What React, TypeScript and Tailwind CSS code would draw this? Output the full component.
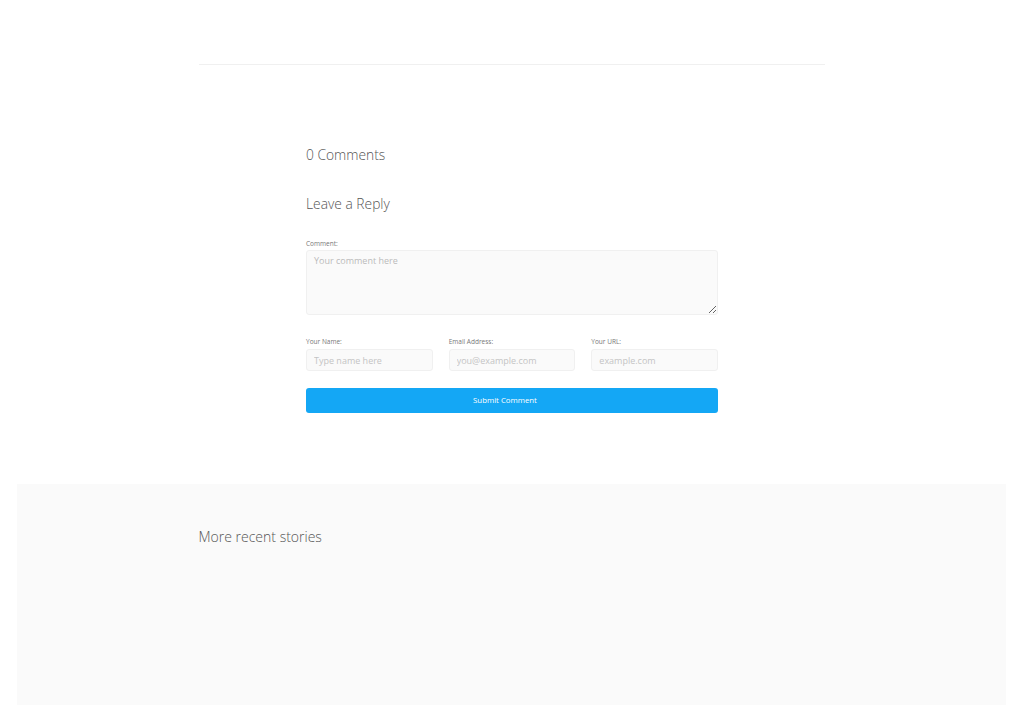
export default function App() {
  const font = { fontFamily: '"Open Sans", sans-serif' };
  return (
    <div className="min-h-[723px] bg-white text-[#444]" style={font}>
      <div className="pt-[64px]">
        <div className="mx-auto h-px w-[626px] bg-[#f0f0f0]" />
      </div>

      {/* Comments */}
      <section className="mx-auto w-[412px] pt-[80px]">
        <h3 className="text-[13.8px] font-light leading-[20px] text-[#555]">0 Comments</h3>
        <h3 className="mt-[29px] text-[13.8px] font-light leading-[20px] text-[#555]">Leave a Reply</h3>

        <form className="mt-[25px]" onSubmit={(e) => e.preventDefault()}>
          <label className="block text-[6.5px] leading-[10px] text-[#777]">Comment:</label>
          <textarea
            placeholder="Your comment here"
            className="mt-[1px] block h-[65px] w-full rounded-[3px] border border-[#f0f0f0] bg-[#fafafa] px-[7px] py-[3px] text-[9px] text-[#555] placeholder:text-[#bbb] outline-none"
          />

          <div className="mt-[22px] grid grid-cols-3 gap-[16px]">
            {[
              ['Your Name:', 'Type name here'],
              ['Email Address:', 'you@example.com'],
              ['Your URL:', 'example.com'],
            ].map(([label, ph]) => (
              <div key={label}>
                <label className="block text-[6.5px] leading-[10px] text-[#777]">{label}</label>
                <input
                  placeholder={ph}
                  className="mt-[2px] block h-[22px] w-full rounded-[3px] border border-[#f0f0f0] bg-[#fafafa] px-[7px] text-[9px] text-[#555] placeholder:text-[#c4c4c4] outline-none"
                />
              </div>
            ))}
          </div>

          <button
            type="submit"
            className="mt-[17px] block h-[25px] w-full rounded-[3px] bg-[#14a7f5] pr-[14px] text-[7.8px] text-white"
          >
            Submit Comment
          </button>
        </form>
      </section>

      {/* More recent stories */}
      <section className="ml-[17px] mt-[71px] h-[221px] w-[989px] bg-[#fafafa]">
        <div className="mx-auto w-[626px] pt-[43px]">
          <h3 className="text-[14px] font-light leading-[20px] text-[#555]">More recent stories</h3>
        </div>
      </section>
    </div>
  );
}
